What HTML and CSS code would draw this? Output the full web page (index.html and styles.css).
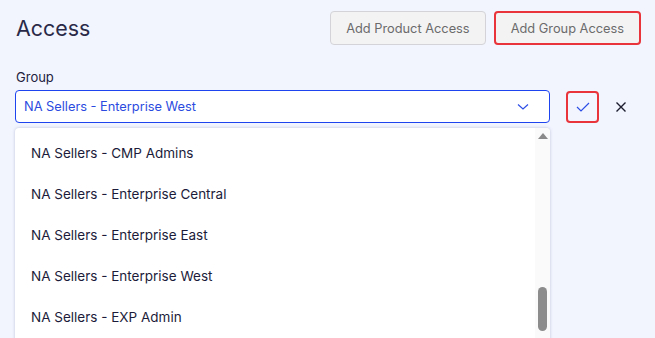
FILE: index.html
```html
<!DOCTYPE html>
<html>
<head>
<meta charset="utf-8">
<link rel="stylesheet" href="styles.css">
</head>
<body>
<div class="page">
  <div class="header">
    <h1 class="title">Access</h1>
    <div class="actions">
      <button class="btn">Add Product Access</button>
      <button class="btn btn-active">Add Group Access</button>
    </div>
  </div>
  <div class="field">
    <label class="label">Group</label>
    <div class="row">
      <div class="select-wrap">
        <div class="select">
          <span class="select-value">NA Sellers - Enterprise West</span>
          <svg class="chev" width="12" height="8" viewBox="0 0 12 8"><path d="M1 1.5 L6 6 L11 1.5" fill="none" stroke="#2d4ee6" stroke-width="1.2"/></svg>
        </div>
        <div class="menu">
          <ul class="options">
            <li>NA Sellers - CMP Admins</li>
            <li>NA Sellers - Enterprise Central</li>
            <li>NA Sellers - Enterprise East</li>
            <li>NA Sellers - Enterprise West</li>
            <li>NA Sellers - EXP Admin</li>
          </ul>
          <div class="scrollbar">
            <svg class="arrow" width="10" height="6" viewBox="0 0 10 6"><path d="M5 0 L10 6 L0 6 Z" fill="#8a8a8a"/></svg>
            <div class="thumb"></div>
          </div>
        </div>
      </div>
      <button class="icon-btn confirm">
        <svg width="16" height="12" viewBox="0 0 16 12"><path d="M2 6 L6 10 L14 2" fill="none" stroke="#2d4ee6" stroke-width="1.2"/></svg>
      </button>
      <button class="icon-btn cancel">
        <svg width="12" height="12" viewBox="0 0 12 12"><path d="M1.5 1.5 L10.5 10.5 M10.5 1.5 L1.5 10.5" fill="none" stroke="#1c1c2e" stroke-width="1.4"/></svg>
      </button>
    </div>
  </div>
</div>
</body>
</html>
```
FILE: styles.css
```css
html, body {
  margin: 0;
  padding: 0;
  height: 100%;
  overflow: hidden;
}
body {
  background: #f2f5fe;
  font-family: "Inter", "Noto Sans", sans-serif;
  color: #1e1e3c;
}
.page {
  padding: 11px 14px 0 15px;
}
.header {
  display: flex;
  justify-content: space-between;
  align-items: flex-start;
}
.title {
  margin: 2px 0 0 1px;
  font-size: 21.4px;
  font-weight: 400;
  line-height: 30px;
  color: #2a2a48;
}
.actions {
  display: flex;
  gap: 8px;
}
.btn {
  font-family: inherit;
  font-size: 12.8px;
  color: #6b6b6b;
  background: #f3f3f4;
  border: 1px solid #d4d4d8;
  border-radius: 4px;
  height: 34px;
  padding: 0 15px;
}
.btn-active {
  border: 2px solid #e8343a;
  padding: 0 15px;
}
.field {
  margin-top: 22px;
}
.label {
  display: block;
  font-size: 13px;
  margin-left: 1px;
  line-height: 20px;
  color: #222240;
}
.row {
  display: flex;
  align-items: flex-start;
  margin-top: 3px;
}
.select-wrap {
  width: 535px;
  position: relative;
}
.select {
  height: 31px;
  border: 1px solid #1e44f0;
  border-radius: 4px;
  background: #fff;
  display: flex;
  align-items: center;
  justify-content: space-between;
  padding: 0 20px 0 8px;
}
.select-value {
  font-size: 12.8px;
  color: #2b4be0;
}
.menu {
  position: absolute;
  top: 38px;
  left: 0;
  width: 535px;
  height: 220px;
  background: #fff;
  border-radius: 4px;
  box-shadow: 0 0 3px rgba(120, 130, 170, 0.45);
  display: flex;
  overflow: hidden;
}
.options {
  list-style: none;
  margin: 0;
  padding: 5px 0 0 16px;
  flex: 1;
}
.options li {
  height: 41px;
  line-height: 41px;
  font-size: 13.5px;
  color: #1c1c3a;
}
.scrollbar {
  width: 15px;
  background: #fafafa;
  position: relative;
}
.arrow {
  position: absolute;
  top: 5px;
  left: 3px;
}
.thumb {
  position: absolute;
  left: 3px;
  top: 159px;
  width: 9px;
  height: 44px;
  border-radius: 5px;
  background: #8c8c8c;
}
.icon-btn {
  background: transparent;
  border: none;
  padding: 0;
  display: flex;
  align-items: center;
  justify-content: center;
}
.confirm {
  margin-left: 16px;
  margin-top: 1px;
  width: 33px;
  height: 32px;
  border: 2px solid #e8343a;
  border-radius: 4px;
}
.cancel {
  margin-left: 12px;
  margin-top: 1px;
  width: 20px;
  height: 32px;
}
```
